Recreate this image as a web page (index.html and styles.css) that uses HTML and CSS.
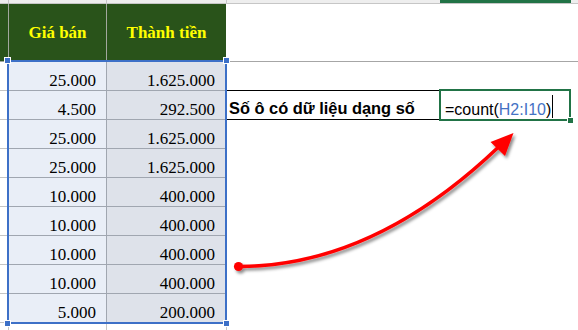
FILE: index.html
```html
<!DOCTYPE html>
<html lang="vi">
<head>
<meta charset="utf-8">
<title>Đếm ô có dữ liệu dạng số</title>
<link rel="stylesheet" href="styles.css">
</head>
<body>
<div class="sheet">
  <div class="row row-top">
    <div class="c grid-v"></div><div class="c grid-v"></div><div class="c grid-v"></div><div class="c"></div><div class="c edge"></div><div class="c"></div>
  </div>

  <div class="row row-head">
    <div class="c hd"></div>
    <div class="c hd">Giá bán</div>
    <div class="c hd hd-last">Thành tiền</div>
    <div class="c rest-head"></div>
  </div>

  <div class="row data">
    <div class="c side"></div>
    <div class="c num price">25.000</div>
    <div class="c num total">1.625.000</div>
    <div class="c label-top"></div>
    <div class="c"></div><div class="c"></div>
  </div>
  <div class="row data">
    <div class="c side"></div>
    <div class="c num price">4.500</div>
    <div class="c num total">292.500</div>
    <div class="c label">Số ô có dữ liệu dạng số</div>
    <div class="c formula"><span class="expr">=count(<span class="ref">H2:I10</span>)</span><span class="caret"></span></div>
    <div class="c"></div>
  </div>
  <div class="row data">
    <div class="c side"></div>
    <div class="c num price">25.000</div>
    <div class="c num total">1.625.000</div>
    <div class="c rest"></div>
  </div>
  <div class="row data">
    <div class="c side"></div>
    <div class="c num price">25.000</div>
    <div class="c num total">1.625.000</div>
    <div class="c rest"></div>
  </div>
  <div class="row data">
    <div class="c side"></div>
    <div class="c num price">10.000</div>
    <div class="c num total">400.000</div>
    <div class="c rest"></div>
  </div>
  <div class="row data">
    <div class="c side"></div>
    <div class="c num price">10.000</div>
    <div class="c num total">400.000</div>
    <div class="c rest"></div>
  </div>
  <div class="row data">
    <div class="c side"></div>
    <div class="c num price">10.000</div>
    <div class="c num total">400.000</div>
    <div class="c rest"></div>
  </div>
  <div class="row data">
    <div class="c side"></div>
    <div class="c num price">10.000</div>
    <div class="c num total">400.000</div>
    <div class="c rest"></div>
  </div>
  <div class="row data">
    <div class="c side"></div>
    <div class="c num price">5.000</div>
    <div class="c num total">200.000</div>
    <div class="c rest"></div>
  </div>

  <div class="row row-foot">
    <div class="c grid-v"></div><div class="c grid-v"></div><div class="c grid-v"></div><div class="c rest"></div>
  </div>

  <!-- highlighted reference range H2:I10 -->
  <div class="range">
    <span class="handle tl"></span><span class="handle tr"></span>
    <span class="handle bl"></span><span class="handle br"></span>
  </div>

  <!-- active cell -->
  <div class="active"><span class="fill-handle"></span></div>

  <!-- callout arrow -->
  <svg class="arrow" width="578" height="330" viewBox="0 0 578 330" aria-hidden="true">
    <defs>
      <filter id="shade" x="-10%" y="-10%" width="130%" height="130%">
        <feDropShadow dx="2" dy="2.5" stdDeviation="1.4" flood-color="#000" flood-opacity="0.45"/>
      </filter>
    </defs>
    <g filter="url(#shade)" fill="#ff0000">
      <path d="M238.5 266.5 Q373 266.5 498 147.5" fill="none" stroke="#ff0000" stroke-width="3.5" stroke-linecap="round"/>
      <circle cx="238.5" cy="266.5" r="4.6"/>
      <polygon points="513.5,133 490.5,142 505,156"/>
    </g>
  </svg>
</div>
</body>
</html>
```

FILE: styles.css
```css
* {
  box-sizing: border-box;
  margin: 0;
  padding: 0;
}

html,
body {
  width: 578px;
  height: 330px;
  overflow: hidden;
  background: #ffffff;
}

.sheet {
  position: relative;
  width: 578px;
  height: 330px;
  display: flex;
  flex-direction: column;
}

.row {
  display: grid;
  grid-template-columns: 9px 98px 120px 213px 131px 7px;
}

/* strip of the row above the header */
.row-top {
  height: 4px;
}

.row-top .c {
  background: #eeeeee;
  border-bottom: 1px solid #c6c6c6;
}

.row-top .edge {
  background: #217346;
}

.grid-v {
  border-right: 1px solid #c6c6c6;
}

/* header row */
.row-head {
  height: 58px;
}

.hd {
  background: #29531a;
  color: #ffff00;
  font: bold 17px/1 "Liberation Serif", "Times New Roman", serif;
  display: flex;
  align-items: center;
  justify-content: center;
  border-right: 1px solid #a2a89e;
  border-bottom: 1px solid #a2a89e;
}

.hd-last {
  border-right-color: #ffffff;
}

.rest-head {
  grid-column: 4 / -1;
  border-bottom: 1px solid #a6a6a6;
}

/* data rows */
.data {
  height: 29px;
}

.side {
  border-right: 1px solid #c4c4c4;
  border-bottom: 1px solid #c4c4c4;
}

.num {
  font: 17px/1 "Liberation Serif", "Times New Roman", serif;
  color: #000000;
  display: flex;
  align-items: flex-end;
  justify-content: flex-end;
  padding: 0 10px 1px 0;
  border-right: 1px solid #a0a6b0;
  border-bottom: 1px solid #a0a6b0;
}

.price {
  background: #e9eef7;
}

.total {
  background: #dee2ea;
  padding-right: 11px;
}

.rest {
  grid-column: 4 / -1;
}

.label-top {
  border-bottom: 1px solid #000000;
}

.label {
  border-bottom: 1px solid #000000;
  font: bold 16.4px/1 "Liberation Sans", Arial, sans-serif;
  color: #000000;
  white-space: nowrap;
  display: flex;
  align-items: flex-end;
  padding: 0 0 3px 2px;
}

.formula {
  font: 16px/1 "Liberation Sans", Arial, sans-serif;
  color: #000000;
  white-space: nowrap;
  display: flex;
  align-items: flex-end;
  padding: 0 0 2px 5px;
}

.ref {
  color: #4472c4;
}

.caret {
  width: 1px;
  height: 23px;
  margin-left: 1px;
  background: #000000;
}

/* footer strip below the data */
.row-foot {
  flex: 1;
}

/* highlighted range */
.range {
  position: absolute;
  left: 7px;
  top: 60px;
  width: 220px;
  height: 264px;
  border: 2px solid #3d70c7;
}

.handle {
  position: absolute;
  width: 7px;
  height: 7px;
  background: #3d70c7;
  border: 1px solid #ffffff;
}

.tl { left: -5px; top: -5px; }
.tr { right: -5px; top: -5px; }
.bl { left: -5px; bottom: -5px; }
.br { right: -5px; bottom: -5px; }

/* active cell */
.active {
  position: absolute;
  left: 439px;
  top: 89px;
  width: 132px;
  height: 32px;
  border: 2px solid #217346;
}

.fill-handle {
  position: absolute;
  right: -5px;
  bottom: -5px;
  width: 7px;
  height: 7px;
  background: #217346;
  border: 1px solid #ffffff;
}

.arrow {
  position: absolute;
  left: 0;
  top: 0;
  pointer-events: none;
}
```
